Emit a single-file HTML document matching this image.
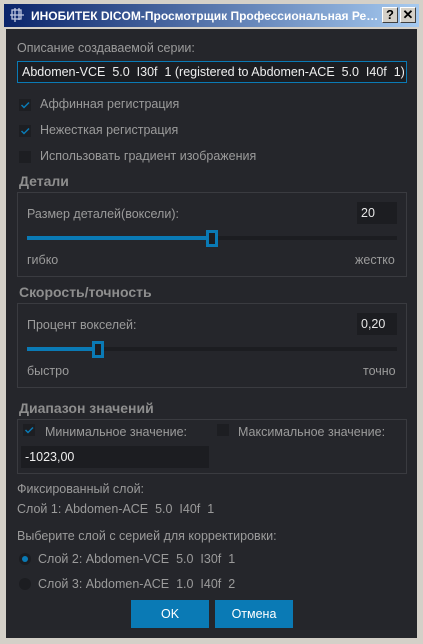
<!DOCTYPE html>
<html><head><meta charset="utf-8"><style>
*{margin:0;padding:0;box-sizing:border-box}
body{width:423px;height:644px;background:#d4d0c8;position:relative;overflow:hidden;font-family:"Liberation Sans","DejaVu Sans",sans-serif;font-size:12.5px;color:#9b9b9b}
.a{position:absolute;white-space:nowrap}
#title{left:4px;top:4px;width:415px;height:23px;background:linear-gradient(90deg,#0a246a,#a6caf0)}
#body{left:6px;top:29px;width:411px;height:609px;background:#25262b}
.tb{position:absolute;top:7px;width:16px;height:16px;background:#d4d0c8;border:1px solid;border-color:#fff #404040 #404040 #fff;font:bold 13px "Liberation Sans",sans-serif;color:#000;text-align:center;line-height:14px}
.cb{position:absolute;width:12px;height:12px;background:#1d1e22}
.cb svg{position:absolute;left:1px;top:1px}
.grp{position:absolute;border:1px solid #3a3b40}
.h{font-weight:bold;font-size:14px;color:#8e8e8e}
.spin{position:absolute;background:#1c1d21;color:#e6e6e6;padding-left:4px;line-height:22px;font-size:12.5px}
.track{position:absolute;height:4px;background:#1c1d21}
.fill{position:absolute;height:4px;background:#0a7ab5}
.hdl{position:absolute;width:12px;height:17px;border:3px solid #0a7ab5;background:#1c1d21}
.btn{position:absolute;top:600px;height:28px;width:78px;background:#0a7ab5;color:#fff;text-align:center;line-height:28px;font-size:12.5px}
</style></head><body>
<div class="a" id="title"></div>
<svg class="a" style="left:9px;top:7px" width="16" height="16"><g stroke="#c0c8e0" stroke-width="1.3" fill="none"><rect x="3" y="3" width="9" height="9"/><path d="M6 1v14M1 8h14M10 1v12"/></g></svg>
<div class="a" style="left:31px;top:9px;width:350px;overflow:hidden;text-overflow:ellipsis;color:#fff;font-weight:bold;font-size:12px">ИНОБИТЕК DICOM-Просмотрщик Профессиональная Редакция</div>
<div class="tb" style="left:382px">?</div>
<div class="tb" style="left:400px">✕</div>
<div class="a" id="body"></div>

<div class="a" style="left:17px;top:41px">Описание создаваемой серии:</div>
<div class="a" style="left:17px;top:61px;width:390px;height:22px;border:1px solid #0a7ab5;background:#1c1d21;color:#eee;padding-left:4px;line-height:20px;font-size:12.5px;overflow:hidden">Abdomen-VCE&nbsp; 5.0&nbsp; I30f&nbsp; 1 (registered to Abdomen-ACE&nbsp; 5.0&nbsp; I40f&nbsp; 1)|</div>

<div class="cb" style="left:19px;top:99px"><svg width="10" height="10"><path d="M1.5 5l2.5 2.5 5-5" stroke="#0a7ab5" stroke-width="1.5" fill="none"/></svg></div>
<div class="a" style="left:40px;top:97px">Аффинная регистрация</div>
<div class="cb" style="left:19px;top:125px"><svg width="10" height="10"><path d="M1.5 5l2.5 2.5 5-5" stroke="#0a7ab5" stroke-width="1.5" fill="none"/></svg></div>
<div class="a" style="left:40px;top:123px">Нежесткая регистрация</div>
<div class="cb" style="left:19px;top:151px"></div>
<div class="a" style="left:40px;top:149px">Использовать градиент изображения</div>

<div class="a h" style="left:19px;top:173px">Детали</div>
<div class="grp" style="left:17px;top:192px;width:390px;height:85px"></div>
<div class="a" style="left:27px;top:207px">Размер деталей(воксели):</div>
<div class="spin" style="left:357px;top:202px;width:40px;height:22px">20</div>
<div class="track" style="left:27px;top:236px;width:370px"></div>
<div class="fill" style="left:27px;top:236px;width:182px"></div>
<div class="hdl" style="left:206px;top:230px"></div>
<div class="a" style="left:27px;top:253px">гибко</div>
<div class="a" style="left:355px;top:253px">жестко</div>

<div class="a h" style="left:19px;top:284px">Скорость/точность</div>
<div class="grp" style="left:17px;top:303px;width:390px;height:85px"></div>
<div class="a" style="left:27px;top:318px">Процент вокселей:</div>
<div class="spin" style="left:357px;top:313px;width:40px;height:22px">0,20</div>
<div class="track" style="left:27px;top:347px;width:370px"></div>
<div class="fill" style="left:27px;top:347px;width:68px"></div>
<div class="hdl" style="left:92px;top:341px"></div>
<div class="a" style="left:27px;top:364px">быстро</div>
<div class="a" style="left:363px;top:364px">точно</div>

<div class="a h" style="left:19px;top:400px">Диапазон значений</div>
<div class="grp" style="left:17px;top:419px;width:390px;height:55px"></div>
<div class="cb" style="left:23px;top:424px"><svg width="10" height="10"><path d="M1.5 5l2.5 2.5 5-5" stroke="#0a7ab5" stroke-width="1.5" fill="none"/></svg></div>
<div class="a" style="left:45px;top:425px">Минимальное значение:</div>
<div class="cb" style="left:217px;top:424px"></div>
<div class="a" style="left:238px;top:425px">Максимальное значение:</div>
<div class="spin" style="left:21px;top:446px;width:188px;height:22px;color:#eee">-1023,00</div>

<div class="a" style="left:17px;top:482px">Фиксированный слой:</div>
<div class="a" style="left:17px;top:502px">Слой 1: Abdomen-ACE&nbsp; 5.0&nbsp; I40f&nbsp; 1</div>
<div class="a" style="left:17px;top:529px">Выберите слой с серией для корректировки:</div>
<div class="a" style="left:19px;top:553px;width:12px;height:12px;border-radius:50%;background:#1c1d21"></div>
<div class="a" style="left:22px;top:556px;width:6px;height:6px;border-radius:50%;background:#0a7ab5"></div>
<div class="a" style="left:38px;top:552px">Слой 2: Abdomen-VCE&nbsp; 5.0&nbsp; I30f&nbsp; 1</div>
<div class="a" style="left:19px;top:578px;width:12px;height:12px;border-radius:50%;background:#1c1d21"></div>
<div class="a" style="left:38px;top:577px">Слой 3: Abdomen-ACE&nbsp; 1.0&nbsp; I40f&nbsp; 2</div>

<div class="btn" style="left:131px">OK</div>
<div class="btn" style="left:215px">Отмена</div>
</body></html>
